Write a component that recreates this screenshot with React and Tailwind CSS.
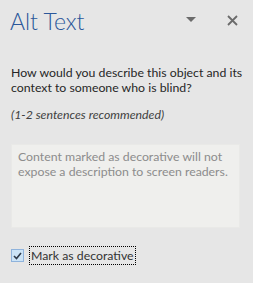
import React, { useState } from 'react';

export default function App() {
    const [decorative, setDecorative] = useState(true);

    return (
        <div className="w-[253px] h-[283px] bg-[#e6e6e6] overflow-hidden" style={{ fontFamily: 'Lato, "Open Sans", sans-serif' }}>
            {/* header */}
            <div className="flex items-center h-[44px] pl-[10px] pr-[15px]">
                <h1 className="text-[23px] font-light text-[#2b579a] leading-none -mt-[1px]">Alt Text</h1>
                <div className="ml-auto flex items-center gap-[31px]">
                    <svg width="10" height="6" viewBox="0 0 10 6" className="-mt-[5px]">
                        <path d="M0 0 H10 L5 5 Z" fill="#6b6b6b" />
                    </svg>
                    <svg width="11" height="11" viewBox="0 0 11 11" className="-mt-[4px]">
                        <path d="M1 1 L10 10 M10 1 L1 10" stroke="#6b6b6b" strokeWidth="1.8" />
                    </svg>
                </div>
            </div>

            <div className="pl-[11px] pr-[4px] pt-[21px] text-[12.3px] text-[#262626]">
                <p className="leading-[15px]">How would you describe this object and its context to someone who is blind?</p>
                <p className="italic leading-[15px] mt-[12px] text-[#404040]">(1-2 sentences recommended)</p>

                <div className="mt-[22px] w-[229px] h-[84px] bg-[#efefed] border border-[#e9e9e7] px-[6px] pt-[4px] text-[#8c8c8c] leading-[15px]">
                    Content marked as decorative will not expose a description to screen readers.
                </div>

                <label className="mt-[18px] flex items-center gap-[5px] cursor-default">
                    <button
                        onClick={() => setDecorative(!decorative)}
                        className="w-[13px] h-[13px] bg-[#cce4f7] border border-[#8fb3dc] flex items-center justify-center"
                    >
                        {decorative && (
                            <svg width="9" height="8" viewBox="0 0 9 8">
                                <path d="M1 4 L3.5 6.5 L8 1" stroke="#2e3a4a" strokeWidth="1.6" fill="none" />
                            </svg>
                        )}
                    </button>
                    <span className="px-[1px] border border-dotted border-black text-[#333] leading-[15px] py-[1px]">Mark as decorative</span>
                </label>
            </div>
        </div>
    );
}
